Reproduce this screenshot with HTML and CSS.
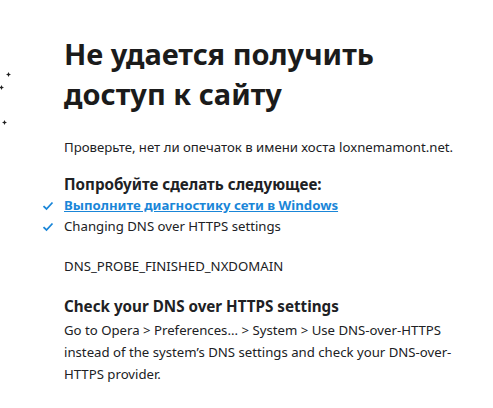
FILE: index.html
```html
<!DOCTYPE html>
<html lang="ru">
<head>
<meta charset="utf-8">
<link rel="stylesheet" href="styles.css">
</head>
<body>
<div class="sparkles" aria-hidden="true">
  <svg class="sp sp1" width="5" height="5" viewBox="0 0 5 5"><path d="M2.5 0 L3.3 1.7 L5 2.5 L3.3 3.3 L2.5 5 L1.7 3.3 L0 2.5 L1.7 1.7 Z" fill="#222"/></svg>
  <svg class="sp sp2" width="5" height="5" viewBox="0 0 5 5"><path d="M2.5 0 L3.3 1.7 L5 2.5 L3.3 3.3 L2.5 5 L1.7 3.3 L0 2.5 L1.7 1.7 Z" fill="#222"/></svg>
  <svg class="sp sp3" width="5" height="5" viewBox="0 0 5 5"><path d="M2.5 0 L3.3 1.7 L5 2.5 L3.3 3.3 L2.5 5 L1.7 3.3 L0 2.5 L1.7 1.7 Z" fill="#222"/></svg>
</div>
<main class="content">
  <h1 class="title">Не удается получить доступ к сайту</h1>
  <p class="hint">Проверьте, нет ли опечаток в имени хоста loxnemamont.net.</p>
  <h2 class="sub">Попробуйте сделать следующее:</h2>
  <ul class="checks">
    <li class="check"><svg class="tick" width="12" height="10" viewBox="0 0 12 10"><path d="M1.5 5.2 L4.5 8 L10.5 1.5" fill="none" stroke="#1a86d8" stroke-width="1.8"/></svg><a class="link" href="#">Выполните диагностику сети в Windows</a></li>
    <li class="check"><svg class="tick" width="12" height="10" viewBox="0 0 12 10"><path d="M1.5 5.2 L4.5 8 L10.5 1.5" fill="none" stroke="#1a86d8" stroke-width="1.8"/></svg><span>Changing DNS over HTTPS settings</span></li>
  </ul>
  <p class="code">DNS_PROBE_FINISHED_NXDOMAIN</p>
  <h2 class="sub2">Check your DNS over HTTPS settings</h2>
  <p class="desc">Go to Opera &gt; Preferences... &gt; System &gt; Use DNS-over-HTTPS instead of the system’s DNS settings and check your DNS-over-HTTPS provider.</p>
</main>
</body>
</html>
```
FILE: styles.css
```css
html, body {
  margin: 0;
  padding: 0;
  background: #fff;
}
body {
  font-family: "Noto Sans", "Open Sans", sans-serif;
  color: #202124;
  position: relative;
  width: 493px;
  height: 408px;
  overflow: hidden;
}
.sparkles {
  position: absolute;
  left: 0;
  top: 0;
}
.sp { position: absolute; }
.sp1 { left: 6px; top: 72px; }
.sp2 { left: -1px; top: 85px; }
.sp3 { left: 2px; top: 120px; }
.content {
  padding: 34px 0 0 64px;
  width: 410px;
}
.title {
  margin: 0;
  font-size: 29px;
  line-height: 40px;
  font-weight: 700;
  color: #1b1b1b;
  width: 330px;
}
.hint {
  margin: 23px 0 0;
  font-size: 13.2px;
  line-height: 20px;
}
.sub {
  margin: 17px 0 0;
  font-size: 15.2px;
  line-height: 20px;
  font-weight: 700;
}
.checks {
  list-style: none;
  margin: 1px 0 0 -22px;
  padding: 0;
}
.check {
  display: flex;
  align-items: center;
  gap: 10px;
  font-size: 13.2px;
  line-height: 21px;
}
.tick { flex: none; }
.link {
  color: #1a86d8;
  font-weight: 700;
  text-decoration: underline;
}
.code {
  margin: 19px 0 0;
  font-size: 13.2px;
  line-height: 20px;
}
.sub2 {
  margin: 20px 0 0;
  font-size: 15.2px;
  line-height: 20px;
  font-weight: 700;
}
.desc {
  margin: 3px 0 0;
  font-size: 13.2px;
  line-height: 22px;
  width: 420px;
}
```
